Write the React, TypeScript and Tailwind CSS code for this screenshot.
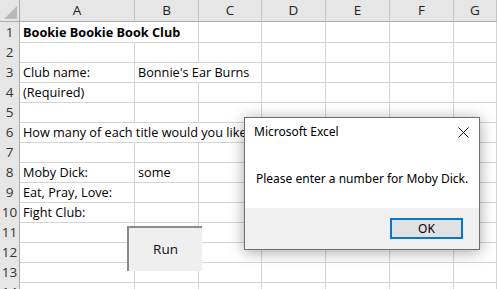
import React from "react";

type Cell = { text?: string; span?: number; bold?: boolean };

const spanClass: Record<number, string> = {
  1: "",
  2: "col-span-2",
  3: "col-span-3",
  4: "col-span-4",
  5: "col-span-5",
  6: "col-span-6",
};

const rows: Cell[][] = [
  [{ text: "Bookie Bookie Book Club", span: 2, bold: true }],
  [],
  [{ text: "Club name:" }, { text: "Bonnie's Ear Burns", span: 2 }],
  [{ text: "(Required)" }],
  [],
  [{ text: "How many of each title would you like?", span: 5 }],
  [],
  [{ text: "Moby Dick:" }, { text: "some" }],
  [{ text: "Eat, Pray, Love:" }],
  [{ text: "Fight Club:" }],
  [],
  [],
  [],
  [],
];

const cols = ["A", "B", "C", "D", "E", "F", "G"];
const gridCols = "grid grid-cols-[20px_115px_64px_63px_64px_64px_64px_1fr]";

function fillRow(cells: Cell[]): Cell[] {
  const out: Cell[] = [...cells];
  let used = out.reduce((s, c) => s + (c.span ?? 1), 0);
  while (used < 7) {
    out.push({});
    used++;
  }
  return out;
}

export default function App() {
  return (
    <div
      className="relative w-[497px] h-[289px] overflow-hidden bg-white text-black"
      style={{ fontFamily: "'Open Sans', 'Noto Sans', sans-serif" }}
    >
      {/* column header */}
      <div className={`${gridCols} h-[22px]`}>
        <div className="relative bg-[#e6e6e6] border-r border-b border-[#ababab]">
          <svg className="absolute right-[2px] bottom-[2px]" width="13" height="13" viewBox="0 0 13 13">
            <polygon points="13,0 13,13 0,13" fill="#b9b9b9" />
          </svg>
        </div>
        {cols.map((c) => (
          <div
            key={c}
            className="bg-[#e6e6e6] border-r border-r-[#c4c4c4] border-b border-b-[#ababab] flex items-center justify-center text-[13.5px] text-[#222]"
          >
            {c}
          </div>
        ))}
      </div>

      {rows.map((r, i) => (
        <div key={i} className={`${gridCols} h-[20px]`}>
          <div className="bg-[#e6e6e6] border-r border-r-[#ababab] border-b border-b-[#d4d4d4] flex items-center justify-center text-[13.5px] text-[#333]">
            {i + 1}
          </div>
          {fillRow(r).map((c, j) => (
            <div
              key={j}
              className={`${spanClass[c.span ?? 1]} border-r border-b border-[#d4d4d4] flex items-end pl-[3px] pb-[1px] whitespace-nowrap overflow-hidden text-[12.7px] leading-[18px] ${c.bold ? "font-bold" : ""}`}
            >
              {c.text ?? ""}
            </div>
          ))}
        </div>
      ))}

      {/* Run button */}
      <div className="absolute left-[127px] top-[226px] w-[75px] h-[45px] bg-[#efefef] border-t-2 border-l-2 border-t-[#8a8a8a] border-l-[#8a8a8a] flex items-center justify-center text-[13.5px] text-[#111]">
        Run
      </div>

      {/* Dialog */}
      <div
        className="absolute left-[244px] top-[117px] w-[236px] h-[133px] bg-white border border-[#6f6f6f] shadow-[0_2px_14px_rgba(0,0,0,0.35)] flex flex-col"
        style={{ fontFamily: "'Noto Sans', 'Open Sans', sans-serif" }}
      >
        <div className="h-[28px] flex items-center justify-between pl-[9px] pr-[10px] text-[12px] text-black">
          <span>Microsoft Excel</span>
          <svg width="11" height="11" viewBox="0 0 11 11">
            <path d="M0.5 0.5 L10.5 10.5 M10.5 0.5 L0.5 10.5" stroke="#111" strokeWidth="1" />
          </svg>
        </div>
        <div className="flex-1 pl-[11px] pt-[25px] text-[12px] leading-[16px] text-black">
          Please enter a number for Moby Dick.
        </div>
        <div className="h-[41px] bg-[#f0f0f0] flex justify-end items-start pt-[10px] pr-[16px]">
          <div className="w-[73px] h-[21px] bg-[#e1e1e1] border-2 border-[#0078d7] flex items-center justify-center text-[12px] text-black">
            OK
          </div>
        </div>
      </div>
    </div>
  );
}
